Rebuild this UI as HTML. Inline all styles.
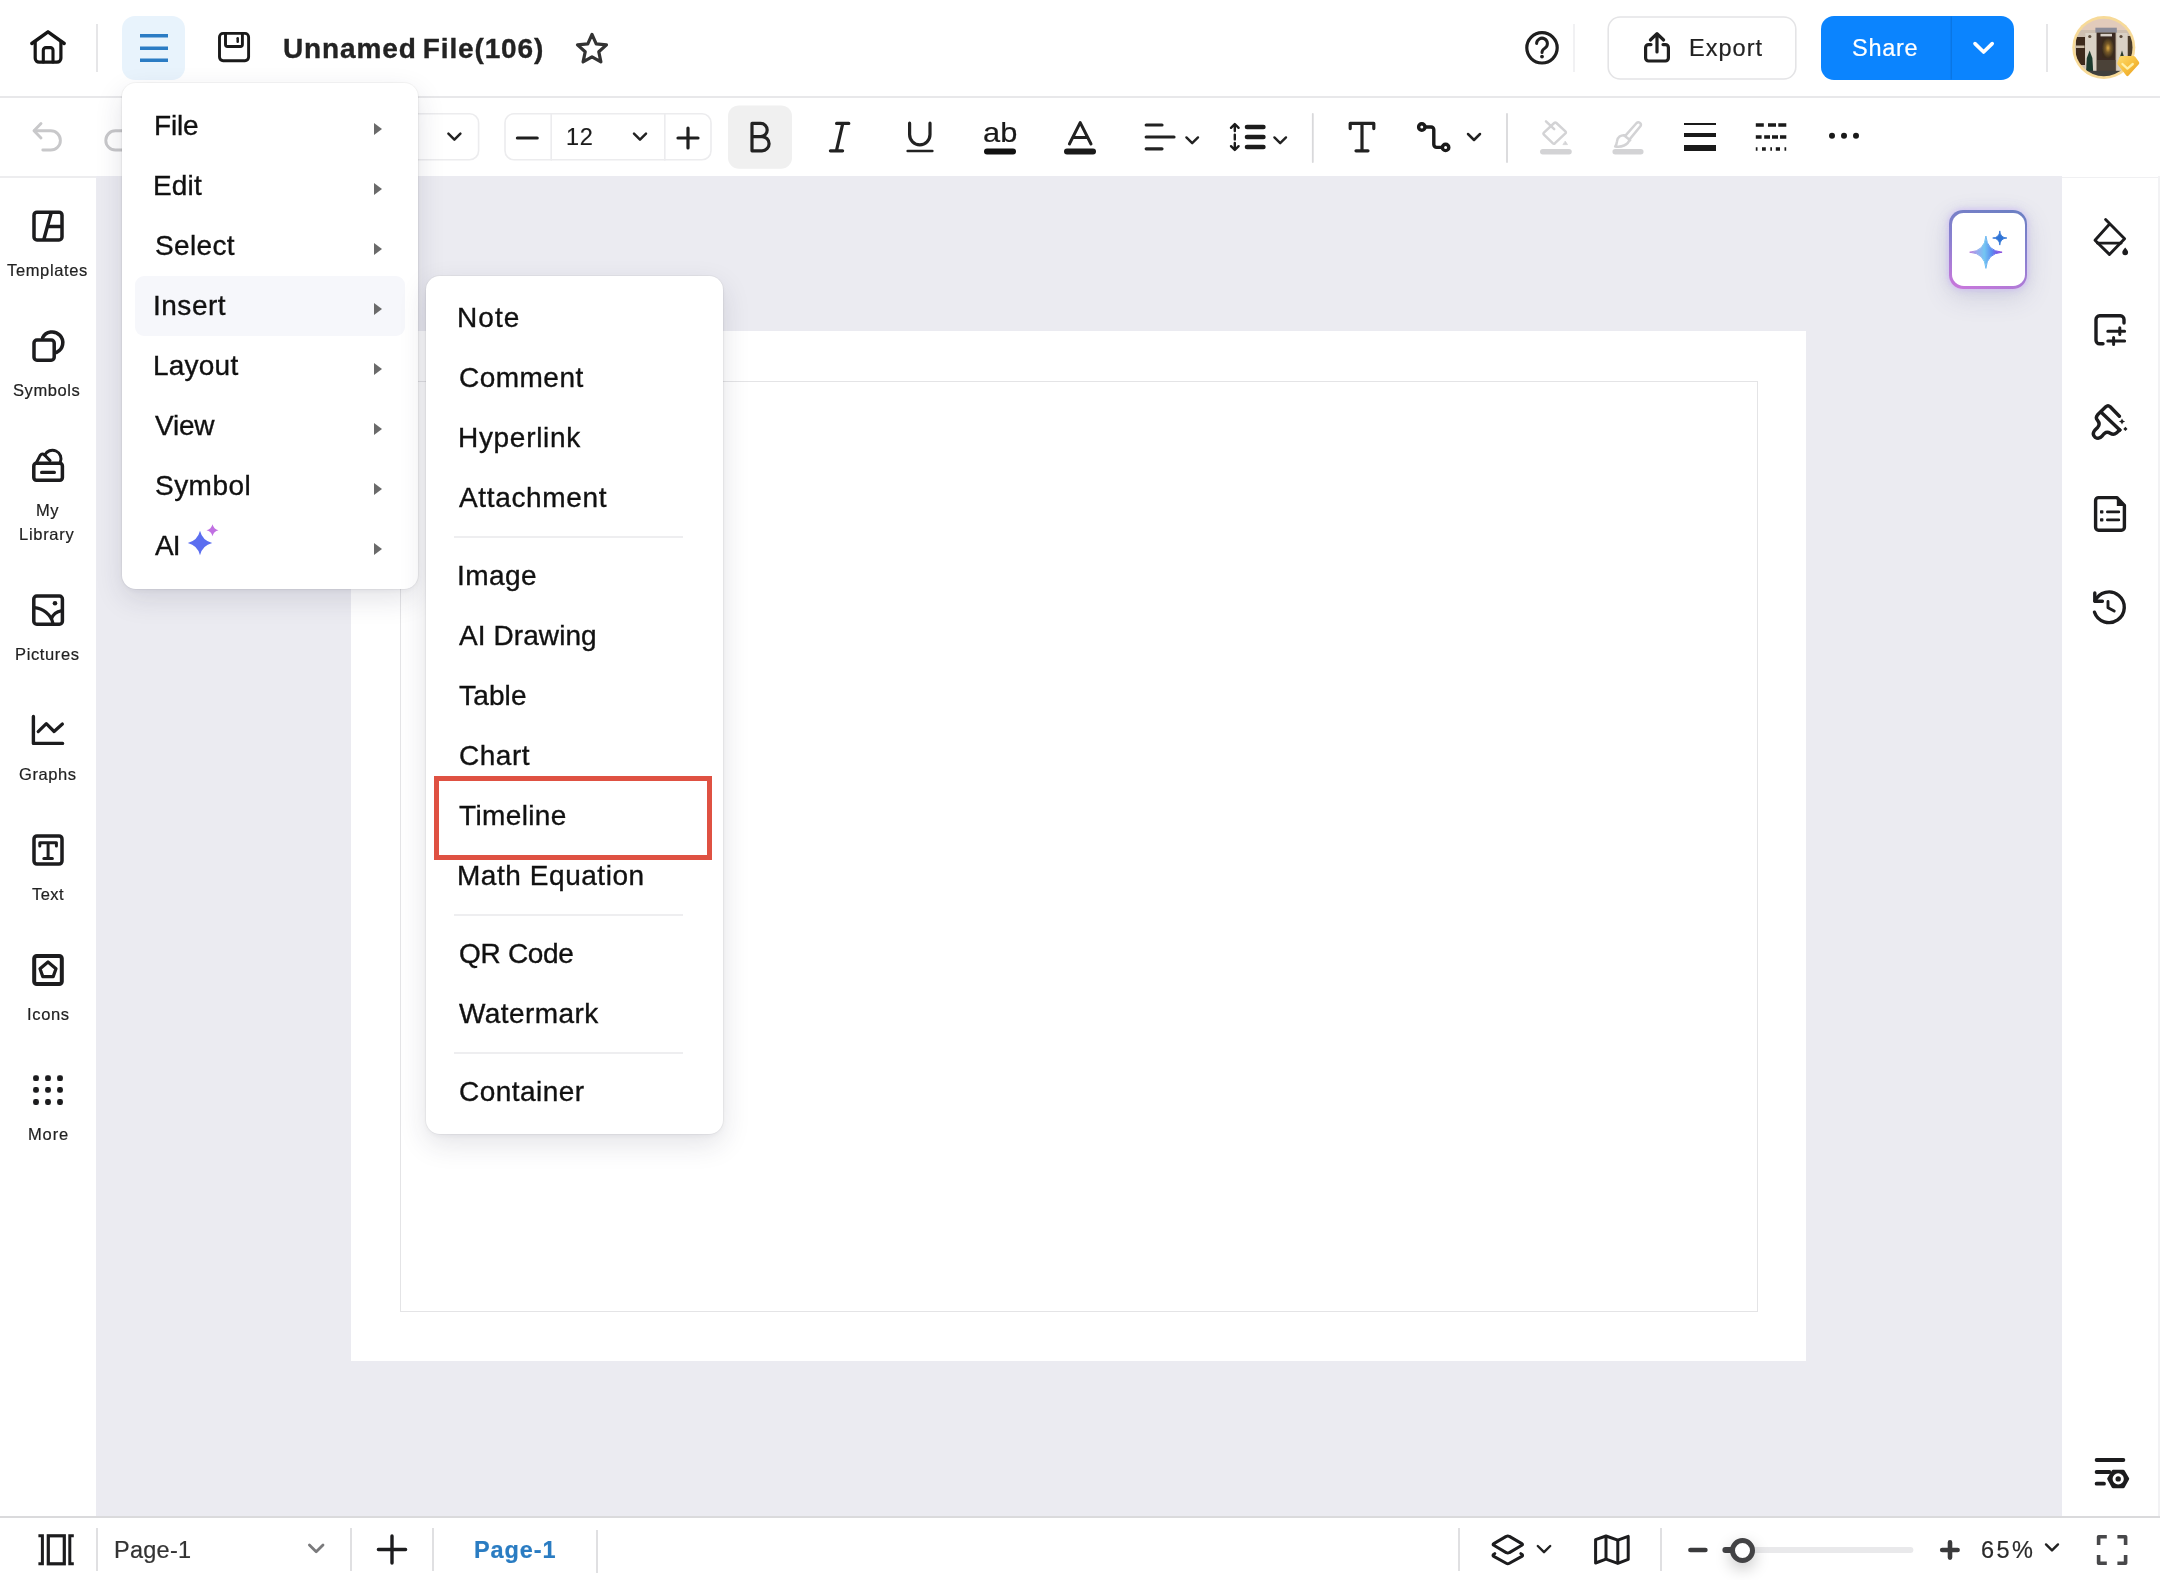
<!DOCTYPE html>
<html lang="en">
<head>
<meta charset="utf-8">
<title>Unnamed File(106)</title>
<style>
*{box-sizing:border-box;margin:0;padding:0}
html,body{width:2160px;height:1580px;overflow:hidden;background:#fff}
body{position:relative;font-family:"Liberation Sans",sans-serif;color:#1c1c1e}
.abs{position:absolute}
.t{position:absolute;white-space:nowrap;line-height:1}
.t,.mi,.sl{will-change:transform}
.t,.sl{-webkit-text-stroke:0.2px currentColor}
#title{-webkit-text-stroke:0.35px #232323}
svg{position:absolute;overflow:visible}
.ic{fill:none;stroke:#1c1c1e;stroke-width:3.4;stroke-linecap:round;stroke-linejoin:round}
#canvas{left:0;top:176px;width:2160px;height:1341px;background:#ebebf1}
#lside{left:0;top:176px;width:96px;height:1341px;background:#fff}
#rside{left:2062px;top:176px;width:96px;height:1341px;background:#fff}
#rstrip{left:2158px;top:98px;width:2px;height:1419px;background:#f2f2f4}
#topbar{left:0;top:0;width:2160px;height:96px;background:#fff}
#topline{left:0;top:96px;width:2160px;height:2px;background:#e8e8ea}
#toolbar{left:0;top:98px;width:2160px;height:78px;background:#fff}
#botline{left:0;top:1516px;width:2160px;height:2px;background:#dadadc}
#botbar{left:0;top:1518px;width:2160px;height:62px;background:#fff}
.vd{position:absolute;width:2px;background:#e6e6e8}
#page{left:351px;top:331px;width:1455px;height:1030px;background:#fff}
#pagein{left:400px;top:381px;width:1358px;height:931px;border:1.5px solid #e4e4e6}
.menu{position:absolute;background:#fff;border-radius:14px;box-shadow:0 0 0 1px rgba(0,0,0,.035),0 10px 28px rgba(40,40,70,.13),0 2px 6px rgba(40,40,70,.05)}
.mi{position:absolute;left:34px;font-size:28px;-webkit-text-stroke:0.35px #111;line-height:60px;height:60px;white-space:nowrap;color:#111}
.arr{position:absolute;left:252.400px;width:0;height:0;border-left:8px solid #6a6a6a;border-top:6px solid transparent;border-bottom:6px solid transparent}
.sep{position:absolute;left:28.4px;width:228.6px;height:2px;background:#eeeef0;margin-top:-0.7px}
.sl{position:absolute;white-space:nowrap;font-size:16.5px;line-height:24px;color:#222}
</style>
</head>
<body>
<div class="abs" id="canvas"></div>
<div class="abs" id="page"></div>
<div class="abs" id="pagein"></div>
<div class="abs" id="lside"></div>
<div class="abs" id="rside"></div>
<div class="abs" id="rstrip"></div>
<div class="abs" id="topbar"></div>
<div class="abs" id="topline"></div>
<div class="abs" id="toolbar"></div>
<div class="abs" id="botline"></div>
<div class="abs" style="left:0;top:176px;width:96px;height:1.5px;background:#ededef"></div>
<div class="abs" style="left:2062px;top:176.5px;width:96px;height:1.5px;background:#f0f0f2"></div>
<div class="abs" id="botbar"></div>

<!-- TOPBAR -->
<svg class="ic" style="left:0;top:0" width="2160" height="96" viewBox="0 0 2160 96">
 <g stroke-width="3.200" stroke="#161616">
  <path d="M31.800,43.500 L48,31.800 L64.200,43.500" stroke-width="3.400"/>
  <path d="M35.200,41.600 V58.200 a4,4 0 0 0 4,4 H56.900 a4,4 0 0 0 4,-4 V41.600"/>
  <path d="M43.300,62 V50.200 a2.600,2.600 0 0 1 2.600,-2.600 H50.400 a2.600,2.600 0 0 1 2.600,2.600 V62" stroke-width="3.100"/>
 </g>
 <rect x="122" y="16" width="63" height="64" rx="13" fill="#e8f3fc" stroke="none"/>
 <g stroke="#2b7cc4" stroke-width="3.4" stroke-linecap="butt">
  <path d="M140,35.8 H168 M140,48.2 H168 M140,60.3 H168"/>
 </g>
 <g stroke-width="2.900" stroke="#1a1a1a">
  <rect x="219.500" y="33.400" width="29.100" height="27.300" rx="3.600"/>
  <path d="M225.500,34 V44.500 a2,2 0 0 0 2,2 H240.400 a2,2 0 0 0 2,-2 V34"/>
  <path d="M237.700,38.200 V41.800" stroke-width="2.500"/>
 </g>
 <path d="M592.0,34.4 L596.2,43.8 L606.5,44.9 L598.8,51.8 L600.9,61.9 L592.0,56.8 L583.1,61.9 L585.2,51.8 L577.5,44.9 L587.8,43.8Z" stroke="#333" stroke-width="3.2"/>
 <g stroke-width="3.2" stroke="#1f1f1f">
  <circle cx="1542" cy="47.8" r="15.2"/>
  <path d="M1536.6,43.6 a5.4,5.4 0 1 1 8.2,4.6 c-1.8,1.1 -2.8,2.2 -2.8,4.2" stroke-width="3"/>
  <circle cx="1542" cy="56.6" r="1.9" fill="#1f1f1f" stroke="none"/>
 </g>
 <rect x="1608.2" y="17" width="187.6" height="62" rx="12" stroke="#e4e4e6" stroke-width="1.6" fill="#fff"/>
 <g stroke-width="3.2" stroke="#1f1f1f">
  <path d="M1651,44.6 H1648.6 a3,3 0 0 0 -3,3 V58 a3,3 0 0 0 3,3 H1665.4 a3,3 0 0 0 3,-3 V47.6 a3,3 0 0 0 -3,-3 H1663"/>
  <path d="M1657,52 V34 M1650.4,40 L1657,33.6 L1663.6,40"/>
 </g>
 <rect x="1821" y="16" width="193" height="64" rx="13" fill="#0b84fe" stroke="none"/>
 <path d="M1951.3,16.5 V79.5" stroke="#0a76e4" stroke-width="1.4" stroke-linecap="butt"/>
 <path d="M1975,43.6 L1983.6,52 L1992.2,43.6" stroke="#fff" stroke-width="3.6"/>
</svg>
<div class="vd" style="left:96px;top:24px;height:48px"></div>
<div class="vd" style="left:1573.400px;top:24px;height:48px;background:#f1f1f3"></div>
<div class="vd" style="left:2046px;top:24px;height:48px"></div>
<div class="t" id="title" style="left:283.00px;letter-spacing:0.86px;word-spacing:-2.4px;top:34px;font-size:28px;font-weight:bold;color:#232323;line-height:30px">Unnamed File(106)</div>
<div class="t" id="export" style="left:1688.62px;letter-spacing:1.04px;top:32.7px;font-size:23.5px;line-height:30px;color:#222">Export</div>
<div class="t" id="share" style="left:1852.14px;letter-spacing:0.72px;top:32.7px;font-size:23.5px;line-height:30px;color:#fff">Share</div>
<!-- avatar -->
<svg style="left:0;top:0" width="2160" height="96" viewBox="0 0 2160 96">
 <defs>
  <clipPath id="avc"><circle cx="2103.800" cy="47.500" r="28.800"/></clipPath>
  <linearGradient id="gold" x1="0" y1="0" x2="1" y2="1"><stop offset="0" stop-color="#ffdc6e"/><stop offset="0.550" stop-color="#f6bd3a"/><stop offset="1" stop-color="#e59a22"/></linearGradient>
  <radialGradient id="glow" cx="0.5" cy="0.5" r="0.5"><stop offset="0" stop-color="#e0ac44"/><stop offset="0.450" stop-color="#7a5c28"/><stop offset="1" stop-color="#3a2c1e"/></radialGradient>
  <filter id="avb" x="-10%" y="-10%" width="120%" height="120%"><feGaussianBlur stdDeviation="0.700"/></filter>
 </defs>
 <circle cx="2103.800" cy="47.500" r="31.500" fill="#f7da98"/>
 <g clip-path="url(#avc)"><g filter="url(#avb)">
  <rect x="2070" y="14" width="70" height="70" fill="#cdbfb0"/>
  <rect x="2070" y="14" width="70" height="16" fill="#e2cbbb"/>
  <rect x="2076" y="37" width="9" height="28" fill="#3c2c1e"/>
  <rect x="2076" y="45.500" width="8.500" height="2.500" fill="#c9b9a4"/>
  <rect x="2085.300" y="33" width="11.200" height="38" fill="#d9d1c5"/>
  <rect x="2117.200" y="33" width="10.200" height="38" fill="#d9d1c5"/>
  <rect x="2127.800" y="36" width="5" height="27" fill="#4a3a2a"/>
  <rect x="2095.400" y="27.700" width="21.400" height="5" fill="#8c8c98"/>
  <rect x="2096.600" y="32.600" width="19" height="38.400" fill="#3a2c20"/>
  <rect x="2100.500" y="33.800" width="11.500" height="2.600" fill="#d8d0c8"/>
  <rect x="2102" y="38" width="12" height="20" fill="url(#glow)"/>
  <rect x="2097" y="60" width="18.500" height="11" fill="#4c4238"/>
  <circle cx="2089.800" cy="36.500" r="1.600" fill="#5a4a3a"/><circle cx="2121" cy="36.500" r="1.600" fill="#5a4a3a"/>
  <path d="M2086,72 L2086.800,58 L2089.600,50.500 L2092.400,58 L2093.200,72Z" fill="#1f3a2e"/>
  <path d="M2119.600,58 L2122,50.500 L2124.400,58Z" fill="#2a3a2c"/>
  <rect x="2070" y="70.800" width="70" height="14" fill="#40403e"/>
 </g></g>
 <path d="M2121,56 H2133.600 Q2134.600,56 2135.200,56.800 L2139,62 Q2139.700,63.200 2138.800,64.200 L2128.600,75.600 Q2127.400,76.800 2126.200,75.600 L2117.600,64.400 Q2116.800,63.200 2117.600,62 L2119.600,56.800 Q2120,56 2121,56Z" fill="url(#gold)"/>
 <path d="M2122.400,64 L2127.400,68.600 L2132.800,64" fill="none" stroke="#fff0a8" stroke-width="2.300" stroke-linecap="round" stroke-linejoin="round"/>
</svg>
<!-- TOOLBAR -->
<svg class="ic" style="left:0;top:98px" width="2160" height="78" viewBox="0 98 2160 78">
 <!-- undo / redo (disabled) -->
 <g stroke="#c8c8ca" stroke-width="2.900">
  <path d="M41,123.600 L34,130.800 L41,138"/>
  <path d="M34.600,130.800 H50.800 a9.600,9.600 0 0 1 0,19.200 H42.800"/>
  <path d="M124,130.800 H115.400 a9.600,9.600 0 0 0 0,19.200 H124"/>
 </g>
 <!-- font family select -->
 <rect x="380" y="113.8" width="98.6" height="46" rx="9" stroke="#ececee" stroke-width="1.6" fill="#fff"/>
 <path d="M448.4,133.6 L454.4,139.6 L460.4,133.6" stroke-width="2.5" stroke="#222"/>
 <!-- font size -->
 <rect x="505" y="113.8" width="206" height="46" rx="9" stroke="#ececee" stroke-width="1.6" fill="#fff"/>
 <path d="M551.2,114 V160 M664.8,114 V160" stroke="#ececee" stroke-width="1.6"/>
 <path d="M517.4,138 H537.2" stroke-width="3.2" stroke="#1f1f1f"/>
 <path d="M634,133.6 L640,139.6 L646,133.6" stroke-width="2.5" stroke="#222"/>
 <path d="M678,138 H698 M688,128 V148" stroke-width="3.2" stroke="#1f1f1f"/>
 <!-- bold -->
 <rect x="728" y="105.4" width="64" height="63.4" rx="11" fill="#f0f0f0" stroke="none"/>
 <path d="M752,123.4 H760.6 a6.6,6.6 0 0 1 0,13.2 H752 Z M752,136.6 H762 a7.1,7.1 0 0 1 0,14.2 H752 Z" stroke-width="3.2" stroke="#222"/>
 <!-- italic -->
 <path d="M836.6,123.4 H848.8 M830.4,150.8 H842.6 M842.8,123.4 L836.4,150.8" stroke-width="3.2" stroke="#222"/>
 <!-- underline -->
 <path d="M909.6,123.2 V134.6 a10.2,10.2 0 0 0 20.4,0 V123.2" stroke-width="3.2" stroke="#222"/>
 <path d="M907.6,151 H932.4" stroke-width="2.4" stroke="#222"/>
 <!-- ab strike -->
 <path d="M987,151.6 H1013" stroke-width="6" stroke="#111"/>
 <!-- A colour -->
 <path d="M1069.4,144 L1080.2,122.6 L1091,144 M1073.2,137.6 H1087.2" stroke-width="3" stroke="#222"/>
 <path d="M1067,151.4 H1093" stroke-width="6" stroke="#1a1a1a"/>
 <!-- align -->
 <path d="M1146.2,125 H1162 M1146.2,137 H1174 M1146.2,148.8 H1162" stroke-width="3.2" stroke="#222"/>
 <path d="M1186.4,137.4 L1192.2,143.2 L1198,137.4" stroke-width="2.4" stroke="#222"/>
 <!-- line spacing -->
 <path d="M1247,127 H1263.4 M1247,137 H1263.4 M1247,147 H1263.4" stroke-width="4.6" stroke="#1c1c1c"/>
 <path d="M1234.8,124.6 V131 M1234.8,134.6 V139.4 M1234.8,143 V149.4 M1231,127.8 L1234.8,124 L1238.6,127.8 M1231,146.2 L1234.8,150 L1238.6,146.2" stroke-width="2.4" stroke="#1c1c1c"/>
 <path d="M1274.4,137.4 L1280.2,143.2 L1286,137.4" stroke-width="2.4" stroke="#222"/>
 <path d="M1312.8,114 V162" stroke="#d9d9db" stroke-width="1.8"/>
 <!-- text T -->
 <path d="M1350.2,128.6 V123.4 H1373.8 V128.6 M1362,123.4 V150.8 M1356,150.8 H1368" stroke-width="3.2" stroke="#222"/>
 <!-- connector -->
 <g stroke-width="3.4" stroke="#1a1a1a">
  <circle cx="1421.8" cy="127" r="3.2"/>
  <circle cx="1445.6" cy="147.4" r="3.2"/>
  <path d="M1425.4,127 H1431 a2.8,2.8 0 0 1 2.8,2.8 V144.6 a2.8,2.8 0 0 0 2.8,2.8 H1442"/>
 </g>
 <path d="M1468,134 L1474,140 L1480,134" stroke-width="2.5" stroke="#222"/>
 <path d="M1507,114 V162" stroke="#d9d9db" stroke-width="1.8"/>
 <!-- fill (disabled) -->
 <g stroke="#d3d3d5" stroke-width="2.500">
  <path d="M1554.200,123 Q1555.300,122 1556.400,123 L1565.400,131.400 Q1566.400,132.400 1565.400,133.400 L1555,143.200 Q1553.800,144.200 1552.700,143.200 L1543.900,134.600 Q1542.900,133.600 1543.900,132.600 Z"/>
  <path d="M1546,121.400 L1554.200,129.200"/>
  <path d="M1542.800,151.800 H1569" stroke-width="5.500"/>
 </g>
 <path d="M1565.400,141.400 L1567.500,144.600 H1563.300 Z" fill="#d3d3d5" stroke="#d3d3d5" stroke-width="0.800"/>
 <!-- brush (disabled) -->
 <g stroke="#d3d3d5" stroke-width="2.500">
  <path d="M1625.400,135.600 L1636.600,123 a2.500,2.500 0 0 1 3.800,3.200 L1629.600,139.400"/>
  <path d="M1625.400,135.400 c-4.600,-0.800 -8.200,2 -8.400,6 c-0.200,2 -0.800,3.600 -1.800,5 c6,1 12.800,-1 14.400,-7"/>
  <path d="M1624.200,135.600 L1630.200,140.200"/>
  <path d="M1615.200,151.800 H1640.800" stroke-width="5.500"/>
 </g>
 <!-- line weight -->
 <path d="M1684,124 H1716" stroke="#1a1a1a" stroke-width="2" stroke-linecap="butt"/>
 <path d="M1684,135 H1716" stroke="#1a1a1a" stroke-width="4" stroke-linecap="butt"/>
 <path d="M1684,148 H1716" stroke="#1a1a1a" stroke-width="6" stroke-linecap="butt"/>
 <!-- dash style -->
 <g stroke="#1a1a1a" stroke-linecap="butt" stroke-width="3.6">
  <path d="M1755.8,125 H1763.800 M1768,125 H1776 M1778.300,125 H1786.300"/>
  <path d="M1755.800,137 H1761.600 M1764.200,137 H1770 M1772,137 H1778 M1780,137 H1786.300"/>
  <path d="M1755.800,149 H1757.500 M1762,149 H1765.800 M1770.300,149 H1772 M1775.800,149 H1780 M1784.500,149 H1786.200"/>
 </g>
 <g fill="#1a1a1a" stroke="none"><circle cx="1832" cy="135.800" r="3"/><circle cx="1844" cy="135.800" r="3"/><circle cx="1856" cy="135.800" r="3"/></g>
</svg>
<div class="t" id="fs12" style="left:566.26px;letter-spacing:0.67px;top:121.6px;font-size:23.5px;line-height:30px;color:#1c1c1c">12</div>
<div class="t" id="abtxt" style="left:983.2px;letter-spacing:0.2px;top:114.5px;font-size:28px;line-height:36px;color:#1a1a1a;transform:scaleX(1.10);transform-origin:0 0">ab</div>
<!-- LEFT -->
<svg class="ic" style="left:0;top:176px" width="96" height="1341" viewBox="0 176 96 1341">
 <g stroke="#1c1c1e" stroke-width="3.5">
  <!-- templates -->
  <rect x="34" y="212.2" width="28" height="27.800" rx="3"/>
  <path d="M51.200,212.600 L43.800,239.600 M48,226.400 H61.600" stroke-linecap="butt"/>
  <!-- symbols -->
  <rect x="34" y="340" width="20.200" height="20.200" rx="3"/>
  <path d="M42.600,337.800 A10.700,10.700 0 1 1 56.600,352.400"/>
  <!-- my library -->
  <rect x="33.800" y="463.300" width="28.600" height="16.900" rx="2.600"/>
  <path d="M41.600,472.400 H54.400" stroke-width="3.200"/>
  <path d="M36.400,462.600 L40.200,455.400 Q42,453 44.400,454.800 L50,460.600" stroke-width="3"/>
  <path d="M44.600,455.200 A8.400,8.400 0 0 1 60.200,462.400" stroke-width="3"/>
  <!-- pictures -->
  <rect x="33.800" y="596" width="28.600" height="28.200" rx="3"/>
  <path d="M34.400,607.600 C42.500,608 51,614.500 53,623.600 M62,610.600 C56.500,611.500 52.500,614.800 51.400,619.200" stroke-width="3.200"/>
  <circle cx="55" cy="603.200" r="2.300" fill="#1c1c1e" stroke="none"/>
  <!-- graphs -->
  <path d="M33.400,716.400 V743.400 H62.600" stroke-width="3.400"/>
  <path d="M38.200,731.600 L46.300,723.700 L54.100,731.500 L62.400,724" stroke-width="3.200"/>
  <!-- text -->
  <rect x="34" y="835.900" width="28" height="28.200" rx="3"/>
  <path d="M39.800,846 V842.800 H56.400 V846 M48.100,842.800 V858.400 M43.800,858.600 H52.400" stroke-width="3"/>
  <!-- icons -->
  <rect x="34.200" y="956" width="27.600" height="28" rx="2.600" stroke-width="4"/>
  <path d="M48,962 L56,968.800 L53.200,976.600 H42.800 L40,968.800 Z" stroke-width="3.200"/>
 </g>
 <g fill="#1c1c1e" stroke="none">
  <rect x="33.100" y="1075.300" width="5.800" height="5.800" rx="2.200"/><rect x="45.100" y="1075.300" width="5.800" height="5.800" rx="2.200"/><rect x="57.100" y="1075.300" width="5.800" height="5.800" rx="2.200"/>
  <rect x="33.100" y="1087" width="5.800" height="5.800" rx="2.200"/><rect x="45.100" y="1087" width="5.800" height="5.800" rx="2.200"/><rect x="57.100" y="1087" width="5.800" height="5.800" rx="2.200"/>
  <rect x="33.100" y="1099.100" width="5.800" height="5.800" rx="2.200"/><rect x="45.100" y="1099.100" width="5.800" height="5.800" rx="2.200"/><rect x="57.100" y="1099.100" width="5.800" height="5.800" rx="2.200"/>
 </g>
</svg>
<div class="sl" id="sl1" style="left:7.42px;letter-spacing:0.64px;top:257.7px">Templates</div>
<div class="sl" id="sl2" style="left:13.48px;letter-spacing:0.60px;top:377.7px">Symbols</div>
<div class="sl" id="sl3" style="left:35.86px;letter-spacing:0.56px;top:497.7px">My</div>
<div class="sl" id="sl4" style="left:19.28px;letter-spacing:0.71px;top:521.7px">Library</div>
<div class="sl" id="sl5" style="left:15.14px;letter-spacing:0.63px;top:641.7px">Pictures</div>
<div class="sl" id="sl6" style="left:18.98px;letter-spacing:0.59px;top:761.7px">Graphs</div>
<div class="sl" id="sl7" style="left:32.14px;letter-spacing:0.42px;top:881.7px">Text</div>
<div class="sl" id="sl8" style="left:26.72px;letter-spacing:0.67px;top:1001.7px">Icons</div>
<div class="sl" id="sl9" style="left:27.72px;letter-spacing:0.88px;top:1121.7px">More</div>
<!-- RIGHT -->
<div class="abs" style="left:1949.200px;top:210.400px;width:78px;height:78.200px;border-radius:14px;background:linear-gradient(195deg,#6a7fc2 0%,#8a80d0 50%,#cc76dc 100%);box-shadow:0 0 5px 1px rgba(205,180,255,.55),0 8px 26px rgba(70,70,130,.17),0 0 14px rgba(120,120,200,.10)"></div>
<div class="abs" style="left:1951.600px;top:212.800px;width:73.200px;height:73.400px;border-radius:11.800px;background:#fff"></div>
<svg style="left:0;top:176px" width="2160" height="1341" viewBox="0 176 2160 1341">
 <defs>
  <linearGradient id="aig" x1="0" y1="0" x2="1" y2="0"><stop offset="0" stop-color="#b878d8"/><stop offset="0.220" stop-color="#9aa8ee"/><stop offset="0.450" stop-color="#74c6f2"/><stop offset="0.680" stop-color="#5a8cf0"/><stop offset="0.850" stop-color="#7a58e6"/><stop offset="1" stop-color="#8a4ad8"/></linearGradient>
 </defs>
 <path d="M1985.9,236.0 Q1987.0,251.1 2002.1,252.2 Q1987.0,253.3 1985.9,268.4 Q1984.8,253.3 1969.7,252.2 Q1984.8,251.1 1985.9,236.0Z" fill="url(#aig)" stroke="url(#aig)" stroke-width="1" stroke-linejoin="round"/>
 <path d="M1999.8,230.9 Q2000.2,237.6 2006.9,238.0 Q2000.2,238.4 1999.8,245.1 Q1999.4,238.4 1992.7,238.0 Q1999.4,237.6 1999.8,230.9Z" fill="#2f74d6" stroke="#2f74d6" stroke-width="0.8" stroke-linejoin="round"/>
 <g class="ic" stroke="#1c1c1e" stroke-width="3">
  <!-- fill bucket -->
  <path d="M2105.600,219.600 L2124.600,238.800 L2109.400,254.400 L2095,240.200 L2109.800,223.800" stroke-width="2.900"/>
  <path d="M2097.600,243.200 H2121" stroke-width="2.700"/>
  <path d="M2125.200,247.400 c1.800,2.200 2.900,3.500 2.900,4.900 a2.900,2.900 0 0 1 -5.800,0 c0,-1.400 1.100,-2.700 2.900,-4.900Z" fill="#1c1c1e" stroke="none"/>
  <!-- page settings -->
  <path d="M2124,323 V319.400 a3.600,3.600 0 0 0 -3.600,-3.600 H2099.600 a3.600,3.600 0 0 0 -3.600,3.600 V340.200 a3.600,3.600 0 0 0 3.600,3.600 H2103"/>
  <path d="M2107.800,331.300 H2124.600 M2107.800,341 H2124.600 M2119.800,327.800 V334.600 M2113.600,337.600 V344.400" stroke-width="3"/>
  <!-- theme brush -->
  <path d="M2119.400,416.200 L2110.200,406.800 Q2108,404.800 2105.800,406.800 L2097.600,414.800 Q2095.200,417.600 2097.400,420.200 Q2100.600,424 2097.800,427.200 L2094.800,430.200 Q2091.600,434.400 2095.200,437.400 Q2099,439.800 2102,436.200 L2103.800,434 Q2106.800,431 2110.200,433.200 Q2113.600,435.400 2116.400,433 L2119.800,430"/>
  <path d="M2101.400,412.400 L2119.800,430"/>
  <!-- doc list -->
  <path d="M2117,497.600 H2098.600 a3,3 0 0 0 -3,3 V527.300 a3,3 0 0 0 3,3 H2121.400 a3,3 0 0 0 3,-3 V505.400 Z"/>
  <path d="M2107.400,511.900 H2118.800 M2107.400,519.900 H2118.800" stroke-width="2.800"/>
  <!-- history -->
  <path d="M2095,601 A15.300,15.300 0 1 1 2094.500,612.200"/>
  <path d="M2094.800,593 V601.200 H2102.400" />
  <path d="M2108,601.400 V607.700 L2114.200,611" stroke-width="2.900"/>
  <!-- page setup bottom -->
  <path d="M2096.600,1460 H2123.400 M2096.600,1472 H2109.400 M2096.600,1483.700 H2104" stroke-width="3.800"/>
 </g>
 <g fill="#1c1c1e">
  <path d="M2122,418.400 L2123,420.500 L2125.100,421.500 L2123,422.500 L2122,424.600 L2121,422.500 L2118.900,421.500 L2121,420.500Z"/><path d="M2125.400,426.800 L2127.500,428.900 L2125.400,431 L2123.300,428.900Z"/>
  <path d="M2116.800,498.200 V506 H2124.200 Z"/>
  <rect x="2100" y="510.200" width="3.400" height="3.400" rx="0.800"/><rect x="2100" y="518.200" width="3.400" height="3.400" rx="0.800"/>
  <path d="M2113.200,1469.700 H2123.200 a1.600,1.600 0 0 1 1.400,0.800 L2129,1478 a1.600,1.600 0 0 1 0,1.600 L2124.600,1487.400 a1.600,1.600 0 0 1 -1.400,0.800 H2113.200 a1.600,1.600 0 0 1 -1.400,-0.800 L2107.400,1479.600 a1.600,1.600 0 0 1 0,-1.600 L2111.800,1470.500 a1.600,1.600 0 0 1 1.400,-0.800Z"/>
  <circle cx="2118.200" cy="1478.900" r="5.600" fill="#fff"/>
  <circle cx="2118.200" cy="1478.900" r="2.700"/>
 </g>
</svg>
<!-- BOTTOM -->
<svg class="ic" style="left:0;top:1518px" width="2160" height="62" viewBox="0 1518 2160 62">
 <g stroke="#1c1c1e" stroke-width="3.200" stroke-linecap="butt" stroke-linejoin="miter">
  <rect x="48.300" y="1535.800" width="16" height="28" />
  <path d="M38.400,1535.800 H42.400 V1563.800 H38.400 M73.800,1535.800 H69.800 V1563.800 H73.800" stroke-width="3"/>
 </g>
 <path d="M309.400,1545 L316.200,1551.800 L323,1545" stroke="#7a7a7c" stroke-width="2.800"/>
 <path d="M378.400,1549.500 H405.600 M392,1536 V1563" stroke="#1c1c1e" stroke-width="3.400"/>
 <!-- layers -->
 <g stroke="#1c1c1e" stroke-width="3">
  <path d="M1506.200,1536.400 Q1507.800,1535.400 1509.400,1536.400 L1521.800,1543.600 Q1523.200,1544.400 1521.800,1545.300 L1509.400,1552.600 Q1507.800,1553.600 1506.200,1552.600 L1493.800,1545.300 Q1492.400,1544.400 1493.800,1543.600 Z"/>
  <path d="M1494.800,1553.600 L1493.200,1554.800 Q1492.600,1555.600 1493.800,1556.400 L1506.200,1563.200 Q1507.800,1564.100 1509.400,1563.200 L1521.800,1556.400 Q1523,1555.600 1522.400,1554.800 L1520.800,1553.600"/>
 </g>
 <path d="M1537.800,1546 L1544,1552.200 L1550.200,1546" stroke="#222" stroke-width="2.400"/>
 <!-- map -->
 <g stroke="#1c1c1e" stroke-width="3">
  <path d="M1595.600,1539.600 L1606,1536 L1617.800,1540.200 L1628.200,1536.400 V1559.400 L1617.800,1563.400 L1606,1559.200 L1595.600,1563 Z"/>
  <path d="M1606,1536.400 V1559 M1617.800,1540.400 V1563" stroke-linecap="butt"/>
 </g>
 <!-- zoom slider -->
 <path d="M1690.400,1550 H1705.400" stroke="#3a3a3c" stroke-width="4.600"/>
 <path d="M1745,1550 H1910.400" stroke="#e9e9eb" stroke-width="6"/>
 <path d="M1725.400,1550 H1738" stroke="#434345" stroke-width="6"/>
 <path d="M1942.200,1550 H1957.600 M1950,1542.400 V1557.600" stroke="#3a3a3c" stroke-width="4.600"/>
 <path d="M2046,1544.400 L2052,1550.400 L2058,1544.400" stroke="#222" stroke-width="2.400"/>
 <!-- fullscreen -->
 <path d="M2098.600,1545 V1536.800 H2106.800 M2117.400,1536.800 H2125.600 V1545 M2125.600,1555 V1563.200 H2117.400 M2106.800,1563.200 H2098.600 V1555" stroke="#48484a" stroke-width="3.600" stroke-linecap="butt" stroke-linejoin="round"/>
</svg>
<div class="abs" style="left:1730px;top:1537.500px;width:25px;height:25px;border-radius:50%;background:#fff;border:5px solid #434345;box-shadow:0 6px 16px rgba(0,0,0,.22)"></div>
<div class="vd" style="left:96px;top:1528px;height:43px;background:#e0e0e2"></div>
<div class="vd" style="left:350.400px;top:1528px;height:43px;background:#e0e0e2"></div>
<div class="vd" style="left:432px;top:1528px;height:43px;background:#e0e0e2"></div>
<div class="vd" style="left:596.200px;top:1530px;height:43px;background:#e0e0e2"></div>
<div class="vd" style="left:1458px;top:1528px;height:43px;background:#e0e0e2"></div>
<div class="vd" style="left:1660.400px;top:1528px;height:43px;background:#e0e0e2"></div>
<div class="t" id="pg1" style="left:113.62px;letter-spacing:0.26px;top:1534.7px;font-size:23.5px;line-height:30px;color:#333">Page-1</div>
<div class="t" id="pg1b" style="left:474.14px;letter-spacing:0.90px;top:1534.7px;font-size:23.5px;font-weight:bold;line-height:30px;color:#2a7cc2">Page-1</div>
<div class="t" id="z65" style="left:1980.86px;letter-spacing:2.40px;top:1534.7px;font-size:23.5px;line-height:30px;color:#2a2a2a">65%</div>
<!-- MENUS -->
<div class="menu" id="mainmenu" style="left:121.500px;top:83px;width:296px;height:505.500px">
<div class="abs" style="left:13.500px;top:193px;width:270px;height:59.500px;border-radius:9px;background:#f6f7fb"></div>
<div class="mi" id="mi1" style="left:32.28px;letter-spacing:-0.22px;top:13px">File</div><div class="arr" style="top:39.5px"></div>
<div class="mi" id="mi2" style="left:31.92px;letter-spacing:0.14px;top:73px">Edit</div><div class="arr" style="top:99.5px"></div>
<div class="mi" id="mi3" style="left:33.00px;letter-spacing:0.35px;top:133px">Select</div><div class="arr" style="top:159.5px"></div>
<div class="mi" id="mi4" style="left:31.92px;letter-spacing:0.51px;top:193px">Insert</div><div class="arr" style="top:219.5px"></div>
<div class="mi" id="mi5" style="left:31.92px;letter-spacing:0.22px;top:253px">Layout</div><div class="arr" style="top:279.5px"></div>
<div class="mi" id="mi6" style="left:33.86px;letter-spacing:-0.23px;top:313px">View</div><div class="arr" style="top:339.5px"></div>
<div class="mi" id="mi7" style="left:33.00px;letter-spacing:0.47px;top:373px">Symbol</div><div class="arr" style="top:399.5px"></div>
<div class="mi" id="mi8" style="left:33.90px;letter-spacing:-0.9px;top:433px">AI</div><div class="arr" style="top:459.5px"></div>
</div>
<svg style="left:0;top:0" width="2160" height="1580" viewBox="0 0 2160 1580" pointer-events="none"><path d="M200.0,530.8 Q202.4,540.6 212.2,543.0 Q202.4,545.4 200.0,555.2 Q197.6,545.4 187.8,543.0 Q197.6,540.6 200.0,530.8Z" fill="#5b6ef0"/><path d="M212.5,524.2 Q213.7,529.0 218.5,530.2 Q213.7,531.4 212.5,536.2 Q211.3,531.4 206.5,530.2 Q211.3,529.0 212.5,524.2Z" fill="#c070e2"/></svg>
<div class="menu" id="submenu" style="left:426px;top:276px;width:296.500px;height:858px">
<div class="mi" id="mi9" style="left:31.28px;letter-spacing:1.06px;top:12px">Note</div>
<div class="mi" id="mi10" style="left:32.72px;letter-spacing:0.48px;top:72px">Comment</div>
<div class="mi" id="mi11" style="left:31.86px;letter-spacing:0.69px;top:132px">Hyperlink</div>
<div class="mi" id="mi12" style="left:33.00px;letter-spacing:0.65px;top:192px">Attachment</div>
<div class="sep" style="top:260.5px"></div>
<div class="mi" id="mi13" style="left:31.28px;letter-spacing:0.42px;top:270px">Image</div>
<div class="mi" id="mi14" style="left:33.00px;letter-spacing:0.08px;top:330px">AI Drawing</div>
<div class="mi" id="mi15" style="left:33.00px;letter-spacing:0.16px;top:390px">Table</div>
<div class="mi" id="mi16" style="left:32.56px;letter-spacing:0.52px;top:450px">Chart</div>
<div class="mi" id="mi17" style="left:33.00px;letter-spacing:0.37px;top:510px">Timeline</div>
<div class="mi" id="mi18" style="left:31.44px;letter-spacing:0.55px;top:570px">Math Equation</div>
<div class="sep" style="top:638.5px"></div>
<div class="mi" id="mi19" style="left:32.72px;letter-spacing:-0.30px;top:648px">QR Code</div>
<div class="mi" id="mi20" style="left:33.00px;letter-spacing:0.43px;top:708px">Watermark</div>
<div class="sep" style="top:776.5px"></div>
<div class="mi" id="mi21" style="left:32.72px;letter-spacing:0.45px;top:786px">Container</div>
</div>
<div class="abs" id="redbox" style="left:434px;top:776px;width:278px;height:83.500px;border:5.800px solid #df5142"></div>
</body>
</html>
